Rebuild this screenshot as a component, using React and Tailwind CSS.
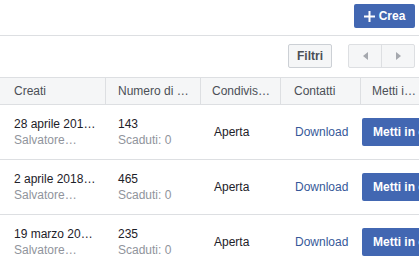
import React from "react";

const rows = [
  { date: "28 aprile 201…", num: "143" },
  { date: "2 aprile 2018…", num: "465" },
  { date: "19 marzo 20…", num: "235" },
];

function Row({ r }) {
  return (
    <div className="flex h-[55px] items-center border-b border-[#dddfe2] text-[12px] text-[#1d2129]">
      <div className="w-[106px] shrink-0 pl-[14px] leading-[16px]">
        <div className="whitespace-nowrap">{r.date}</div>
        <div className="whitespace-nowrap text-[#90949c]">Salvatore…</div>
      </div>
      <div className="w-[95px] shrink-0 pl-[12px] leading-[16px]">
        <div>{r.num}</div>
        <div className="text-[#90949c]">Scaduti: 0</div>
      </div>
      <div className="w-[80px] shrink-0 pl-[13px]">Aperta</div>
      <div className="w-[80px] shrink-0 pl-[14px] text-[#365899]">Download</div>
      <div className="shrink-0 pl-[1px]">
        <div className="flex h-[28px] w-[80px] items-center rounded-[2px] bg-[#4267b2] pl-[11px] font-bold text-white whitespace-nowrap">
          Metti in c
        </div>
      </div>
    </div>
  );
}

export default function App() {
  return (
    <div
      className="h-[260px] w-[419px] overflow-hidden bg-white"
      style={{ fontFamily: '"Liberation Sans", Arial, sans-serif' }}
    >
      <div className="flex h-[36px] justify-end border-b border-[#dddfe2] pt-[4px] pr-[4px]">
        <div className="flex h-[24px] w-[61px] items-center justify-center gap-[4px] rounded-[2px] bg-[#4267b2] text-[12px] font-bold text-white">
          <svg width="11" height="11" viewBox="0 0 11 11">
            <path d="M4.5 0h2v4.5H11v2H6.5V11h-2V6.5H0v-2h4.5z" fill="white" />
          </svg>
          <span>Crea</span>
        </div>
      </div>
      <div className="flex h-[41px] items-start justify-end gap-[16px] pt-[8px] pr-[4px]">
        <div className="flex h-[24px] w-[44px] items-center justify-center rounded-[2px] border border-[#ccd0d5] bg-[#f5f6f7] text-[12px] font-bold text-[#4b4f56]">
          Filtri
        </div>
        <div className="flex h-[24px] w-[67px] rounded-[2px] border border-[#dddfe2] bg-[#f5f6f7]">
          <div className="flex flex-1 items-center justify-center border-r border-[#dddfe2]">
            <svg width="5" height="8" viewBox="0 0 5 8">
              <path d="M5 0v8L0 4z" fill="#a5a8ae" />
            </svg>
          </div>
          <div className="flex flex-1 items-center justify-center">
            <svg width="5" height="8" viewBox="0 0 5 8">
              <path d="M0 0v8l5-4z" fill="#a5a8ae" />
            </svg>
          </div>
        </div>
      </div>
      <div className="flex h-[28px] items-center border-y border-[#dddfe2] bg-[#f5f6f7] text-[12px] text-[#4b4f56]">
        <div className="flex h-full w-[106px] shrink-0 items-center border-r border-[#dddfe2] pl-[14px]">Creati</div>
        <div className="flex h-full w-[95px] shrink-0 items-center border-r border-[#dddfe2] pl-[12px] whitespace-nowrap">Numero di …</div>
        <div className="flex h-full w-[80px] shrink-0 items-center border-r border-[#dddfe2] pl-[11px] whitespace-nowrap">Condivis…</div>
        <div className="flex h-full w-[80px] shrink-0 items-center border-r border-[#dddfe2] pl-[13px]">Contatti</div>
        <div className="flex h-full shrink-0 items-center pl-[11px] whitespace-nowrap">Metti i…</div>
      </div>
      {rows.map((r, i) => (
        <Row key={i} r={r} />
      ))}
    </div>
  );
}
